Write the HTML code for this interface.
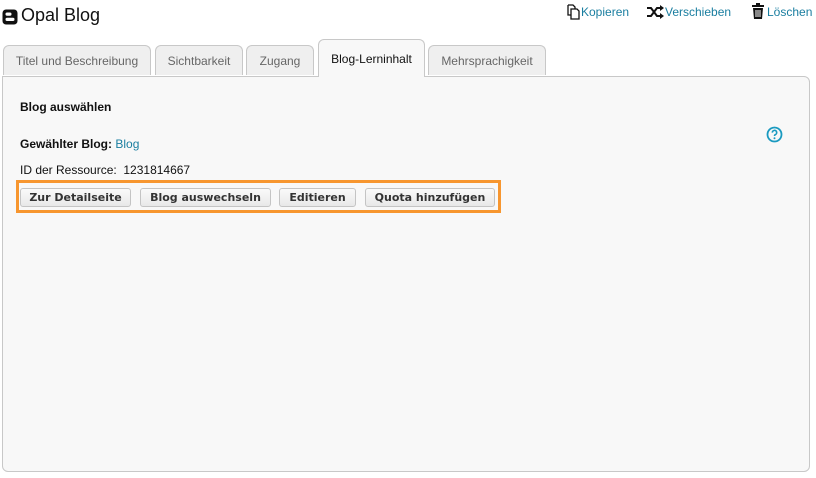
<!DOCTYPE html>
<html><head><meta charset="utf-8"><style>
body{margin:0;width:816px;height:478px;background:#fff;font-family:"Liberation Sans",sans-serif;position:relative;overflow:hidden}
.abs{position:absolute}
.tab{position:absolute;top:45px;height:30px;border:1px solid #c8c8c8;border-bottom:none;border-radius:6px 6px 0 0;background:#efefef;color:#666;font-size:12px;line-height:31px;text-align:center;box-sizing:border-box}
.tab.act{top:39px;height:38px;background:#f8f8f8;color:#111;line-height:38px;z-index:2}
.panel{position:absolute;left:2px;top:76px;width:808px;height:396px;border:1px solid #c8c8c8;border-radius:0 6px 6px 6px;background:#f8f8f8;box-sizing:border-box}
.btn{position:absolute;top:188px;height:19px;border:1px solid #c4c4c4;border-radius:3px;background:linear-gradient(#fafafa,#e8e8e8);font-family:"DejaVu Sans",sans-serif;font-weight:bold;font-size:11px;color:#333;line-height:17px;text-align:center;box-sizing:border-box}
.lnk{color:#1a7ea0;font-size:12px}
</style></head><body>
<svg class="abs" style="left:2px;top:9px" width="16" height="16" viewBox="0 0 16 16"><rect x="0.5" y="0.5" width="15" height="15" rx="3.5" fill="#111"/><rect x="3.5" y="3.5" width="6" height="3.2" rx="1.6" fill="#fff"/><rect x="3.5" y="8.8" width="9" height="3.2" rx="1.6" fill="#fff"/></svg>
<div class="abs" style="left:21px;top:5px;font-size:18px;color:#111">Opal Blog</div>

<svg class="abs" style="left:563px;top:4px" width="17" height="16" viewBox="0 0 17 16"><path d="M5 1h5l2 2v3M5 1v10h3" fill="none" stroke="#111" stroke-width="1.3"/><path d="M8 5h6l2 2v8H8z" fill="#fff" stroke="#111" stroke-width="1.3"/></svg>
<div class="abs lnk" style="left:581px;top:5px">Kopieren</div>
<svg class="abs" style="left:646px;top:5px" width="18" height="14" viewBox="0 0 18 14"><path d="M1 3h4l6 8h4M1 11h4l6-8h4" fill="none" stroke="#111" stroke-width="2"/><path d="M14 0l4 3-4 3zM14 8l4 3-4 3z" fill="#111"/></svg>
<div class="abs lnk" style="left:665px;top:5px">Verschieben</div>
<svg class="abs" style="left:751px;top:3px" width="14" height="16" viewBox="0 0 14 16"><rect x="1" y="2" width="12" height="2" fill="#111"/><rect x="5" y="0" width="4" height="2" fill="#111"/><path d="M2 5h10l-1 11H3z" fill="#111"/><path d="M5 7v7M7 7v7M9 7v7" stroke="#fff" stroke-width="1"/></svg>
<div class="abs lnk" style="left:767px;top:5px">Löschen</div>

<div class="panel"></div>
<div class="tab" style="left:3px;width:148px">Titel und Beschreibung</div>
<div class="tab" style="left:155px;width:88px">Sichtbarkeit</div>
<div class="tab" style="left:246px;width:68px">Zugang</div>
<div class="tab act" style="left:318px;width:107px">Blog-Lerninhalt</div>
<div class="tab" style="left:428px;width:118px">Mehrsprachigkeit</div>

<div class="abs" style="left:20px;top:100px;font-size:12px;font-weight:bold;color:#111">Blog auswählen</div>
<svg class="abs" style="left:766px;top:126px" width="17" height="17" viewBox="0 0 17 17"><circle cx="8.5" cy="8.5" r="7" fill="none" stroke="#1a9ac0" stroke-width="1.8"/><path d="M6.3 6.6a2.2 2.2 0 1 1 3 2c-.7.3-.8.7-.8 1.4" fill="none" stroke="#1a9ac0" stroke-width="1.6"/><circle cx="8.5" cy="12.3" r="1" fill="#1a9ac0"/></svg>
<div class="abs" style="left:20px;top:137px;font-size:12px;color:#111"><b>Gewählter Blog:</b> <span style="color:#1a7ea0">Blog</span></div>
<div class="abs" style="left:20px;top:163px;font-size:12px;color:#111">ID der Ressource:&nbsp; 1231814667</div>

<div class="abs" style="left:16px;top:180px;width:485px;height:33px;border:3px solid #f7962f;box-sizing:border-box"></div>
<div class="btn" style="left:20px;width:111px">Zur Detailseite</div>
<div class="btn" style="left:140px;width:131px">Blog auswechseln</div>
<div class="btn" style="left:279px;width:77px">Editieren</div>
<div class="btn" style="left:365px;width:130px">Quota hinzufügen</div>
</body></html>
